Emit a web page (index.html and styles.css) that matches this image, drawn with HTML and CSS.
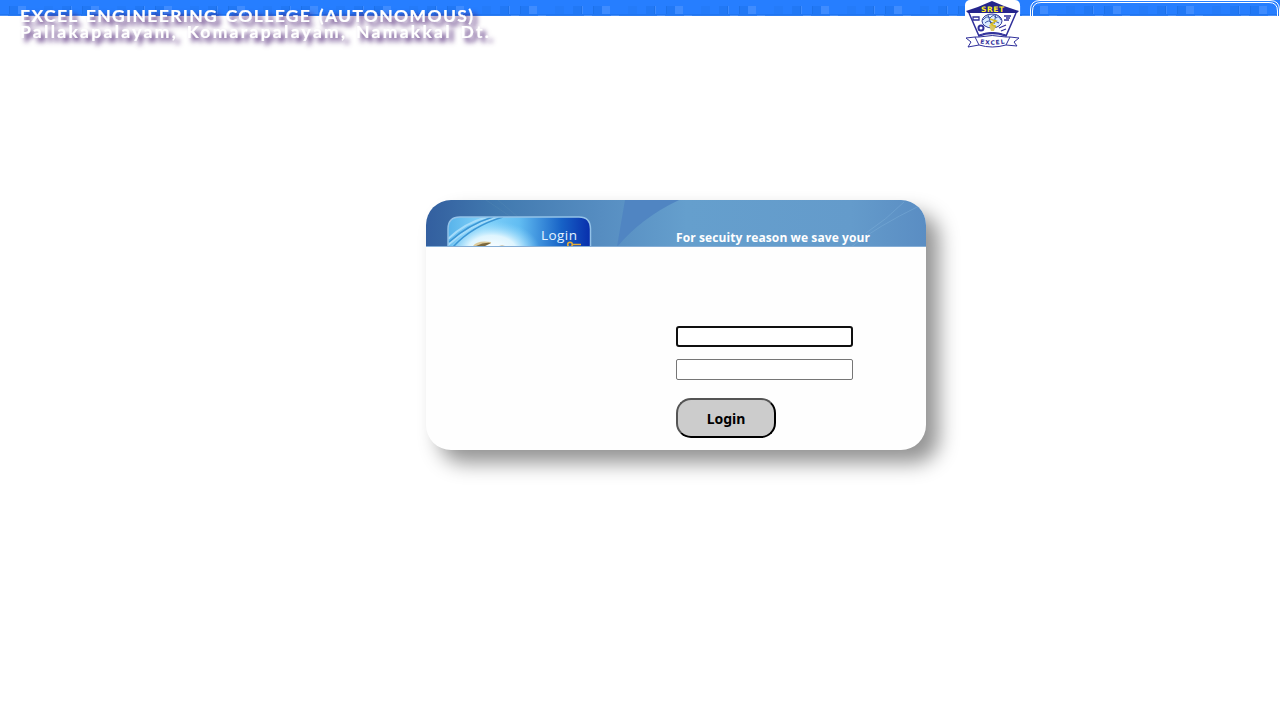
FILE: index.html
```html
<!DOCTYPE html>
<html lang="en">
<head>
<meta charset="utf-8">
<title>Excel Engineering College</title>
<link rel="stylesheet" href="styles.css">
</head>
<body>
<header class="header">
  <svg class="band" width="1280" height="16">
    <defs>
      <pattern id="tiles" width="73" height="16" patternUnits="userSpaceOnUse">
        <rect width="73" height="16" fill="#267eff"/>
        <path d="M10 6h8v8h-8zM62 6h8v8h-8z" fill="#2178f5"/>
        <path d="M44 6h9v8h-9z" fill="#247bf9"/>
        <path d="M9 6h1v8h-1zM70 6h1v8h-1z" fill="#1c71e9"/>
        <path d="M18 6h8v8h-8zM71 6h1v8h-1z" fill="#3f8cff"/>
        <path d="M0 14h73v1H0z" fill="#2075f0"/>
        <path d="M0 15h73v1H0z" fill="#2c7df3"/>
        <path d="M27 15h8v1h-8zM0 15h8v1H0z" fill="#4990f8"/>
      </pattern>
    </defs>
    <rect width="1280" height="16" fill="url(#tiles)"/>
  </svg>
  <div class="name">
    <svg width="500" height="52">
      <text x="20" y="22.300" textLength="453">EXCEL ENGINEERING COLLEGE (AUTONOMOUS)</text>
      <text x="20" y="38.300" textLength="469">Pallakapalayam, Komarapalayam, Namakkal Dt.</text>
    </svg>
  </div>
  <svg class="crest" width="55" height="48" viewBox="0 0 55 48">
    <rect width="55" height="48" rx="5" fill="#fff"/>
    <path d="M1 11Q14 7 27 1Q40 7 54 11L52 13H3z" fill="#25258c"/>
    <path d="M4 13L14 36Q27 31 41 36L51 13" fill="#fff" stroke="#30309b" stroke-width="1.500"/>
    <text class="sret" x="16" y="11.500" textLength="23">SRET</text>
    <ellipse cx="27" cy="21" rx="10" ry="7" fill="#d9eaff" stroke="#2d3999"/>
    <path d="M18 20q4-5 7-2q4-5 6 0q3-3 5 2M20 23q4-4 7 0q4-3 7 0M23 15l3 9M31 14l-2 10" fill="none" stroke="#3c55a8"/>
    <path d="M24 25h7l-2 6h-3z" fill="#d8c666"/>
    <path d="M25 19l6 2-5 3 5 3" fill="none" stroke="#d7bd23" stroke-width="1.500"/>
    <path d="M8 17h6v3H8zM39 16h7M41 18h4M39 20h5M34 28l7-3M36 31l5-2" fill="none" stroke="#30309b" stroke-width="1.300"/>
    <circle cx="16" cy="28" r="2.500" fill="none" stroke="#30309b" stroke-width="2"/>
    <path d="M14 35Q27 30 41 35M18 34Q27 31 37 34" fill="none" stroke="#30309b"/>
    <path d="M1 38L10 37 14 37Q27 34 41 37L45 37 54 38 49 42 52 46 41 45Q27 49 14 45L3 47 6 42z" fill="#fff" stroke="#30309b"/>
    <path d="M10 37l4 8M45 37l-4 8" stroke="#30309b"/>
    <path id="ribbon" d="M15 43.500Q27 46 42 43" fill="none"/>
    <text class="excel"><textPath href="#ribbon" textLength="25">EXCEL</textPath></text>
  </svg>
  <svg class="frame" width="250" height="16">
    <path d="M.500 16V10Q.500 .500 10 .500H240Q249.500 .500 249.500 10V16M2.500 16V11Q2.500 2.500 11 2.500H239Q247.500 2.500 247.500 11V16" fill="none" stroke="#fff"/>
  </svg>
</header>
<main class="card">
  <div class="banner">
    <svg class="art" width="500" height="47">
      <defs>
        <linearGradient id="sky" x2="1"><stop offset="0" stop-color="#335f9f"/><stop offset=".14" stop-color="#4179af"/><stop offset=".35" stop-color="#568dc1"/><stop offset=".52" stop-color="#659fcd"/><stop offset=".85" stop-color="#649bcb"/><stop offset="1" stop-color="#5a8dc3"/></linearGradient>
        <linearGradient id="photo" x2="1"><stop offset="0" stop-color="#58b3ea"/><stop offset=".25" stop-color="#82d2fa"/><stop offset=".5" stop-color="#62bdf2"/><stop offset=".8" stop-color="#1762c6"/><stop offset="1" stop-color="#082fac"/></linearGradient>
        <radialGradient id="glow" gradientUnits="userSpaceOnUse" cx="0" cy="0" r="1" gradientTransform="translate(66 50) scale(48 29)"><stop offset="0" stop-color="#fff"/><stop offset=".5" stop-color="#e4f7ff" stop-opacity=".95"/><stop offset="1" stop-color="#8edaff" stop-opacity="0"/></radialGradient>
        <clipPath id="picture"><path d="M22 47V29Q22 17 34 17H153Q164 17 164 29V47z"/></clipPath>
      </defs>
      <rect width="500" height="47" fill="url(#sky)"/>
      <path d="M60 0L85 17M72 0L92 17" stroke="#6192b7" opacity=".25"/>
      <path d="M199 0H253Q215 18 191 47Q195 23 199 0z" fill="#5085c2"/>
      <path d="M425 47Q450 27 495 5M440 33Q460 20 478 2" fill="none" stroke="#83b5db" opacity=".4"/>
      <g clip-path="url(#picture)">
        <rect x="22" y="17" width="142" height="30" fill="url(#photo)"/>
        <rect x="22" y="17" width="142" height="30" fill="url(#glow)"/>
        <path d="M22 39Q40 22 62 17M22 45Q44 25 72 17" fill="none" stroke="#a5dcfa" stroke-width="2"/>
        <path d="M23 42Q43 24 67 17M27 47Q46 26 77 17" fill="none" stroke="#3b96d5" stroke-width="1.500"/>
        <path d="M47 46Q51 40 65 42Q66 43 61 45L56 47z" fill="#dbc99a"/>
        <path d="M50 46Q58 42 65 43L57 47z" fill="#79663c"/>
        <path d="M70 47Q76 44 82 47z" fill="#b29b69"/>
      </g>
      <path d="M22 47V29Q22 17 34 17H153Q164.500 17 164.500 29V47" fill="none" stroke="#93c2e8" stroke-width="1.500"/>
      <text class="photo-title" x="115" y="40" textLength="36">Login</text>
      <circle cx="144" cy="44.500" r="2.300" fill="none" stroke="#e6ad36" stroke-width="1.600"/>
      <path d="M147 44.500H155" stroke="#e6ad36" stroke-width="1.500"/>
      <path d="M0 46.500H500" stroke="#86aed6"/>
    </svg>
    <p class="notice">For secuity reason we save your</p>
  </div>
  <form class="form">
    <input class="field focused" type="text" aria-label="User name">
    <input class="field" type="password" aria-label="Password">
    <button class="submit" type="button">Login</button>
  </form>
</main>
</body>
</html>
```
FILE: styles.css
```css
body { margin: 0; min-height: 720px; background: #fff; }
.header { position: relative; height: 200px; }
.band { display: block; }
.name { position: absolute; left: 0; top: 0; }
.name svg { display: block; overflow: visible; }
.name text { font: 700 17.5px Lato, sans-serif; word-spacing: 2px; fill: #fff; stroke: #fff; stroke-width: .2px; filter: drop-shadow(4px 4px 2.5px rgba(62, 15, 105, .9)); }
.crest { position: absolute; left: 965px; top: 0; }
.sret { font: bold 7.5px "DejaVu Sans", sans-serif; fill: #ffef20; }
.excel { font: bold 6px "DejaVu Sans", sans-serif; fill: #30309b; }
.frame { position: absolute; left: 1030px; top: 0; }
.card { width: 500px; height: 250px; margin-left: 426px; border-radius: 25px; overflow: hidden; background: #fefefe; box-shadow: 13px 13px 20px #949494; }
.banner { display: grid; height: 47px; }
.banner > * { grid-area: 1 / 1; }
.notice { margin: 29px 0 0 250px; font: bold 12px/18px "Open Sans", sans-serif; letter-spacing: .1px; color: #fff; white-space: nowrap; }
.photo-title { font: 13.5px "Open Sans", sans-serif; fill: #e5f4ff; }
.form { display: flex; flex-direction: column; align-items: flex-start; gap: 12px; padding: 79px 0 0 250px; }
.field { box-sizing: border-box; width: 177px; height: 21px; margin: 0; border: 1px solid #767676; border-radius: 2px; background: #fff; outline: none; }
.focused { border: 2px solid #101010; border-radius: 3px; }
.submit { box-sizing: border-box; width: 100px; height: 40px; margin-top: 6px; padding: 0; border: 2px outset #000; border-radius: 15px; background: #ccc; color: #000; font: bold 14px "Noto Sans", sans-serif; }
```
